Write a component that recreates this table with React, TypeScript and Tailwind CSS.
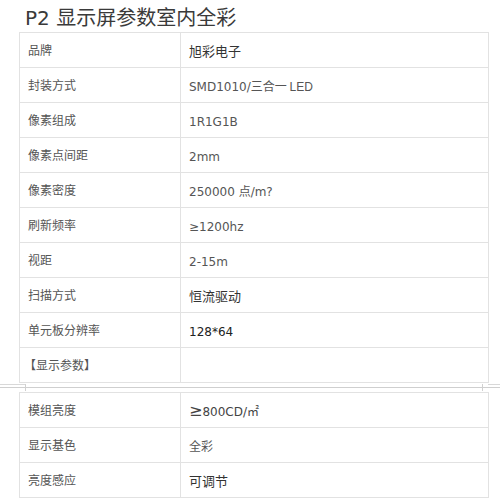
import React from 'react';

interface Row {
  label: string;
  value: React.ReactNode;
}

const cjk = "font-['Noto_Sans_CJK_SC',sans-serif]";
const latin = "font-['DejaVu_Sans','Noto_Sans_CJK_SC',sans-serif]";

const topRows: Row[] = [
  { label: '品牌', value: <span className={`${cjk} text-[13px] text-[#333]`}>旭彩电子</span> },
  {
    label: '封装方式',
    value: (
      <span className="text-[12px] text-[#555]">
        <span className={latin}>SMD1010/</span>
        <span className={cjk}>三合一 </span>
        <span className="font-['Liberation_Sans',sans-serif]">LED</span>
      </span>
    ),
  },
  { label: '像素组成', value: <span className={`${latin} text-[12px] text-[#555]`}>1R1G1B</span> },
  { label: '像素点间距', value: <span className={`${latin} text-[12px] text-[#555]`}>2mm</span> },
  {
    label: '像素密度',
    value: (
      <span className={`${latin} text-[12px] text-[#555]`}>
        250000 <span className={cjk}>点</span>/m?
      </span>
    ),
  },
  { label: '刷新频率', value: <span className={`${latin} text-[12px] text-[#555]`}>≥1200hz</span> },
  { label: '视距', value: <span className={`${latin} text-[12px] text-[#555]`}>2-15m</span> },
  { label: '扫描方式', value: <span className={`${cjk} text-[13px] text-[#333]`}>恒流驱动</span> },
  {
    label: '单元板分辨率',
    value: <span className={`${latin} text-[12px] font-medium text-[#222]`}>128*64</span>,
  },
  { label: '【显示参数】', value: '' },
];

const bottomRows: Row[] = [
  {
    label: '模组亮度',
    value: (
      <span className={`${latin} text-[12px] text-[#444]`}>
        <span className="text-[16px]">≥</span>800CD/㎡
      </span>
    ),
  },
  { label: '显示基色', value: <span className={`${cjk} text-[12px] text-[#555]`}>全彩</span> },
  { label: '亮度感应', value: <span className={`${cjk} text-[13px] text-[#333]`}>可调节</span> },
];

const ParamTable = ({ rows }: { rows: Row[] }) => (
  <table className="ml-[19px] w-[470px] table-fixed border-collapse border border-[#e2e2e2]">
    <tbody>
      {rows.map((r) => (
        <tr key={r.label} className="h-[35px]">
          <td className={`${cjk} w-[161px] border border-[#e2e2e2] pl-[8px] align-middle text-[12px] text-[#555]`}>
            {r.label === '【显示参数】' ? <span className="-ml-[4px]">{r.label}</span> : r.label}
          </td>
          <td className="border border-[#e2e2e2] pl-[8px] align-middle">{r.value}</td>
        </tr>
      ))}
    </tbody>
  </table>
);

export default function App() {
  return (
    <div className="h-[502px] w-[500px] overflow-hidden bg-white">
      <div className={`${latin} h-[32px] pl-[25px] text-[20px] leading-[34px] text-[#3a3a3a]`}>
        P2 <span className={cjk}>显示屏参数室内全彩</span>
      </div>

      <ParamTable rows={topRows} />

      {/* stitched page break */}
      <div className="relative h-[9px]">
        <div className="absolute left-0 top-[1px] w-[25px] border-t border-[#d8d8d8]" />
        <div className="absolute left-0 right-0 top-[4px] border-t border-[#cfcfcf]" />
        <div className="absolute left-[25px] top-[1px] h-[7px] border-l border-[#d0d0d0]" />
        <div className="absolute left-[482px] top-[1px] h-[7px] border-l border-[#d0d0d0]" />
        <div className="absolute left-[488px] right-0 top-[1px] border-t border-[#d8d8d8]" />
      </div>

      <ParamTable rows={bottomRows} />
    </div>
  );
}
